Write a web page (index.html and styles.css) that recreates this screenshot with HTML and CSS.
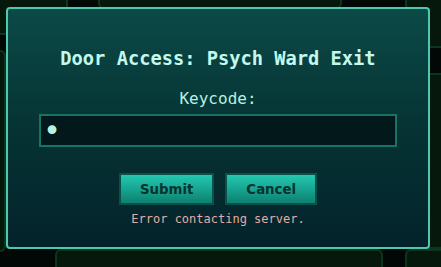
FILE: index.html
```html
<!DOCTYPE html>
<html lang="en">
<head>
<meta charset="utf-8">
<title>Door Access</title>
<link rel="stylesheet" href="styles.css">
</head>
<body>
<div class="desk">
  <div class="pane pane-tl"></div>
  <div class="pane pane-top"></div>
  <div class="pane pane-tr"></div>
  <div class="pane pane-r"></div>
  <div class="pane pane-l"></div>
  <div class="pane pane-bottom"></div>
  <div class="pane pane-br"></div>
</div>
<div class="modal">
  <h3 class="title">Door Access: Psych Ward Exit</h3>
  <label class="label" for="code">Keycode:</label>
  <input class="field" id="code" type="password" value="1">
  <div class="actions">
    <button class="btn btn-submit">Submit</button>
    <button class="btn btn-cancel">Cancel</button>
  </div>
  <p class="error">Error contacting server.</p>
</div>
</body>
</html>
```
FILE: styles.css
```css
html, body {
  margin: 0;
  padding: 0;
  width: 441px;
  height: 267px;
  overflow: hidden;
  background: #010805;
  font-family: "DejaVu Sans Mono", monospace;
}
.desk {
  position: absolute;
  left: 0;
  top: 0;
  width: 441px;
  height: 267px;
  overflow: hidden;
}
.pane {
  position: absolute;
  background: #06180b;
  border: 2px solid #0b361d;
  border-radius: 6px;
}
.pane-tl { left: -10px; top: -10px; width: 74px; height: 41px; }
.pane-top { left: 98px; top: -10px; width: 240px; height: 15px; }
.pane-tr { left: 405px; top: -10px; width: 50px; height: 54px; }
.pane-r { left: 405px; top: 73px; width: 34px; height: 172px; border-right: none; border-radius: 6px 0 0 6px; }
.pane-l { left: 0; top: 50px; width: 4px; height: 198px; border-left: none; border-radius: 0 6px 6px 0; }
.pane-bottom { left: 55px; top: 249px; width: 324px; height: 16px; border-bottom: none; border-radius: 6px 6px 0 0; }
.pane-br { left: 405px; top: 249px; width: 34px; height: 16px; border-bottom: none; border-right: none; border-radius: 6px 0 0 0; }

.modal {
  position: absolute;
  left: 6px;
  top: 7px;
  width: 424px;
  height: 242px;
  box-sizing: border-box;
  border: 2px solid #4cc9ae;
  border-radius: 4px;
  background: linear-gradient(to bottom, #0b4a47 0%, #063334 50%, #03232a 100%);
  padding: 39px 31px 0;
  display: flex;
  flex-direction: column;
  align-items: center;
}
.title {
  margin: 0;
  font-size: 18.72px;
  line-height: 22px;
  font-weight: bold;
  color: #c4f8ec;
}
.label {
  margin-top: 19px;
  font-size: 16px;
  line-height: 19px;
  color: #b9efe2;
}
.field {
  margin: 6px 0 0;
  width: 358px;
  height: 33px;
  box-sizing: border-box;
  border: 2px solid #177363;
  border-radius: 0;
  background: #02181a;
  color: #b6f2e4;
  font-family: "DejaVu Sans Mono", monospace;
  font-size: 30px;
  line-height: 29px;
  padding: 0 0 0 2px;
  outline: none;
}
.actions {
  margin-top: 26px;
  display: flex;
  gap: 11px;
}
.btn {
  height: 32px;
  box-sizing: border-box;
  border: 2px solid #0a5249;
  border-radius: 0;
  background: linear-gradient(to bottom, #24c8b0 0%, #17a591 50%, #0e8070 100%);
  color: #06332e;
  font-family: "DejaVu Sans", sans-serif;
  font-weight: bold;
  font-size: 13.33px;
  padding: 0 19px;
}
.error {
  margin: 7px 0 0;
  font-size: 12px;
  line-height: 15px;
  color: #e3aca5;
}
```
